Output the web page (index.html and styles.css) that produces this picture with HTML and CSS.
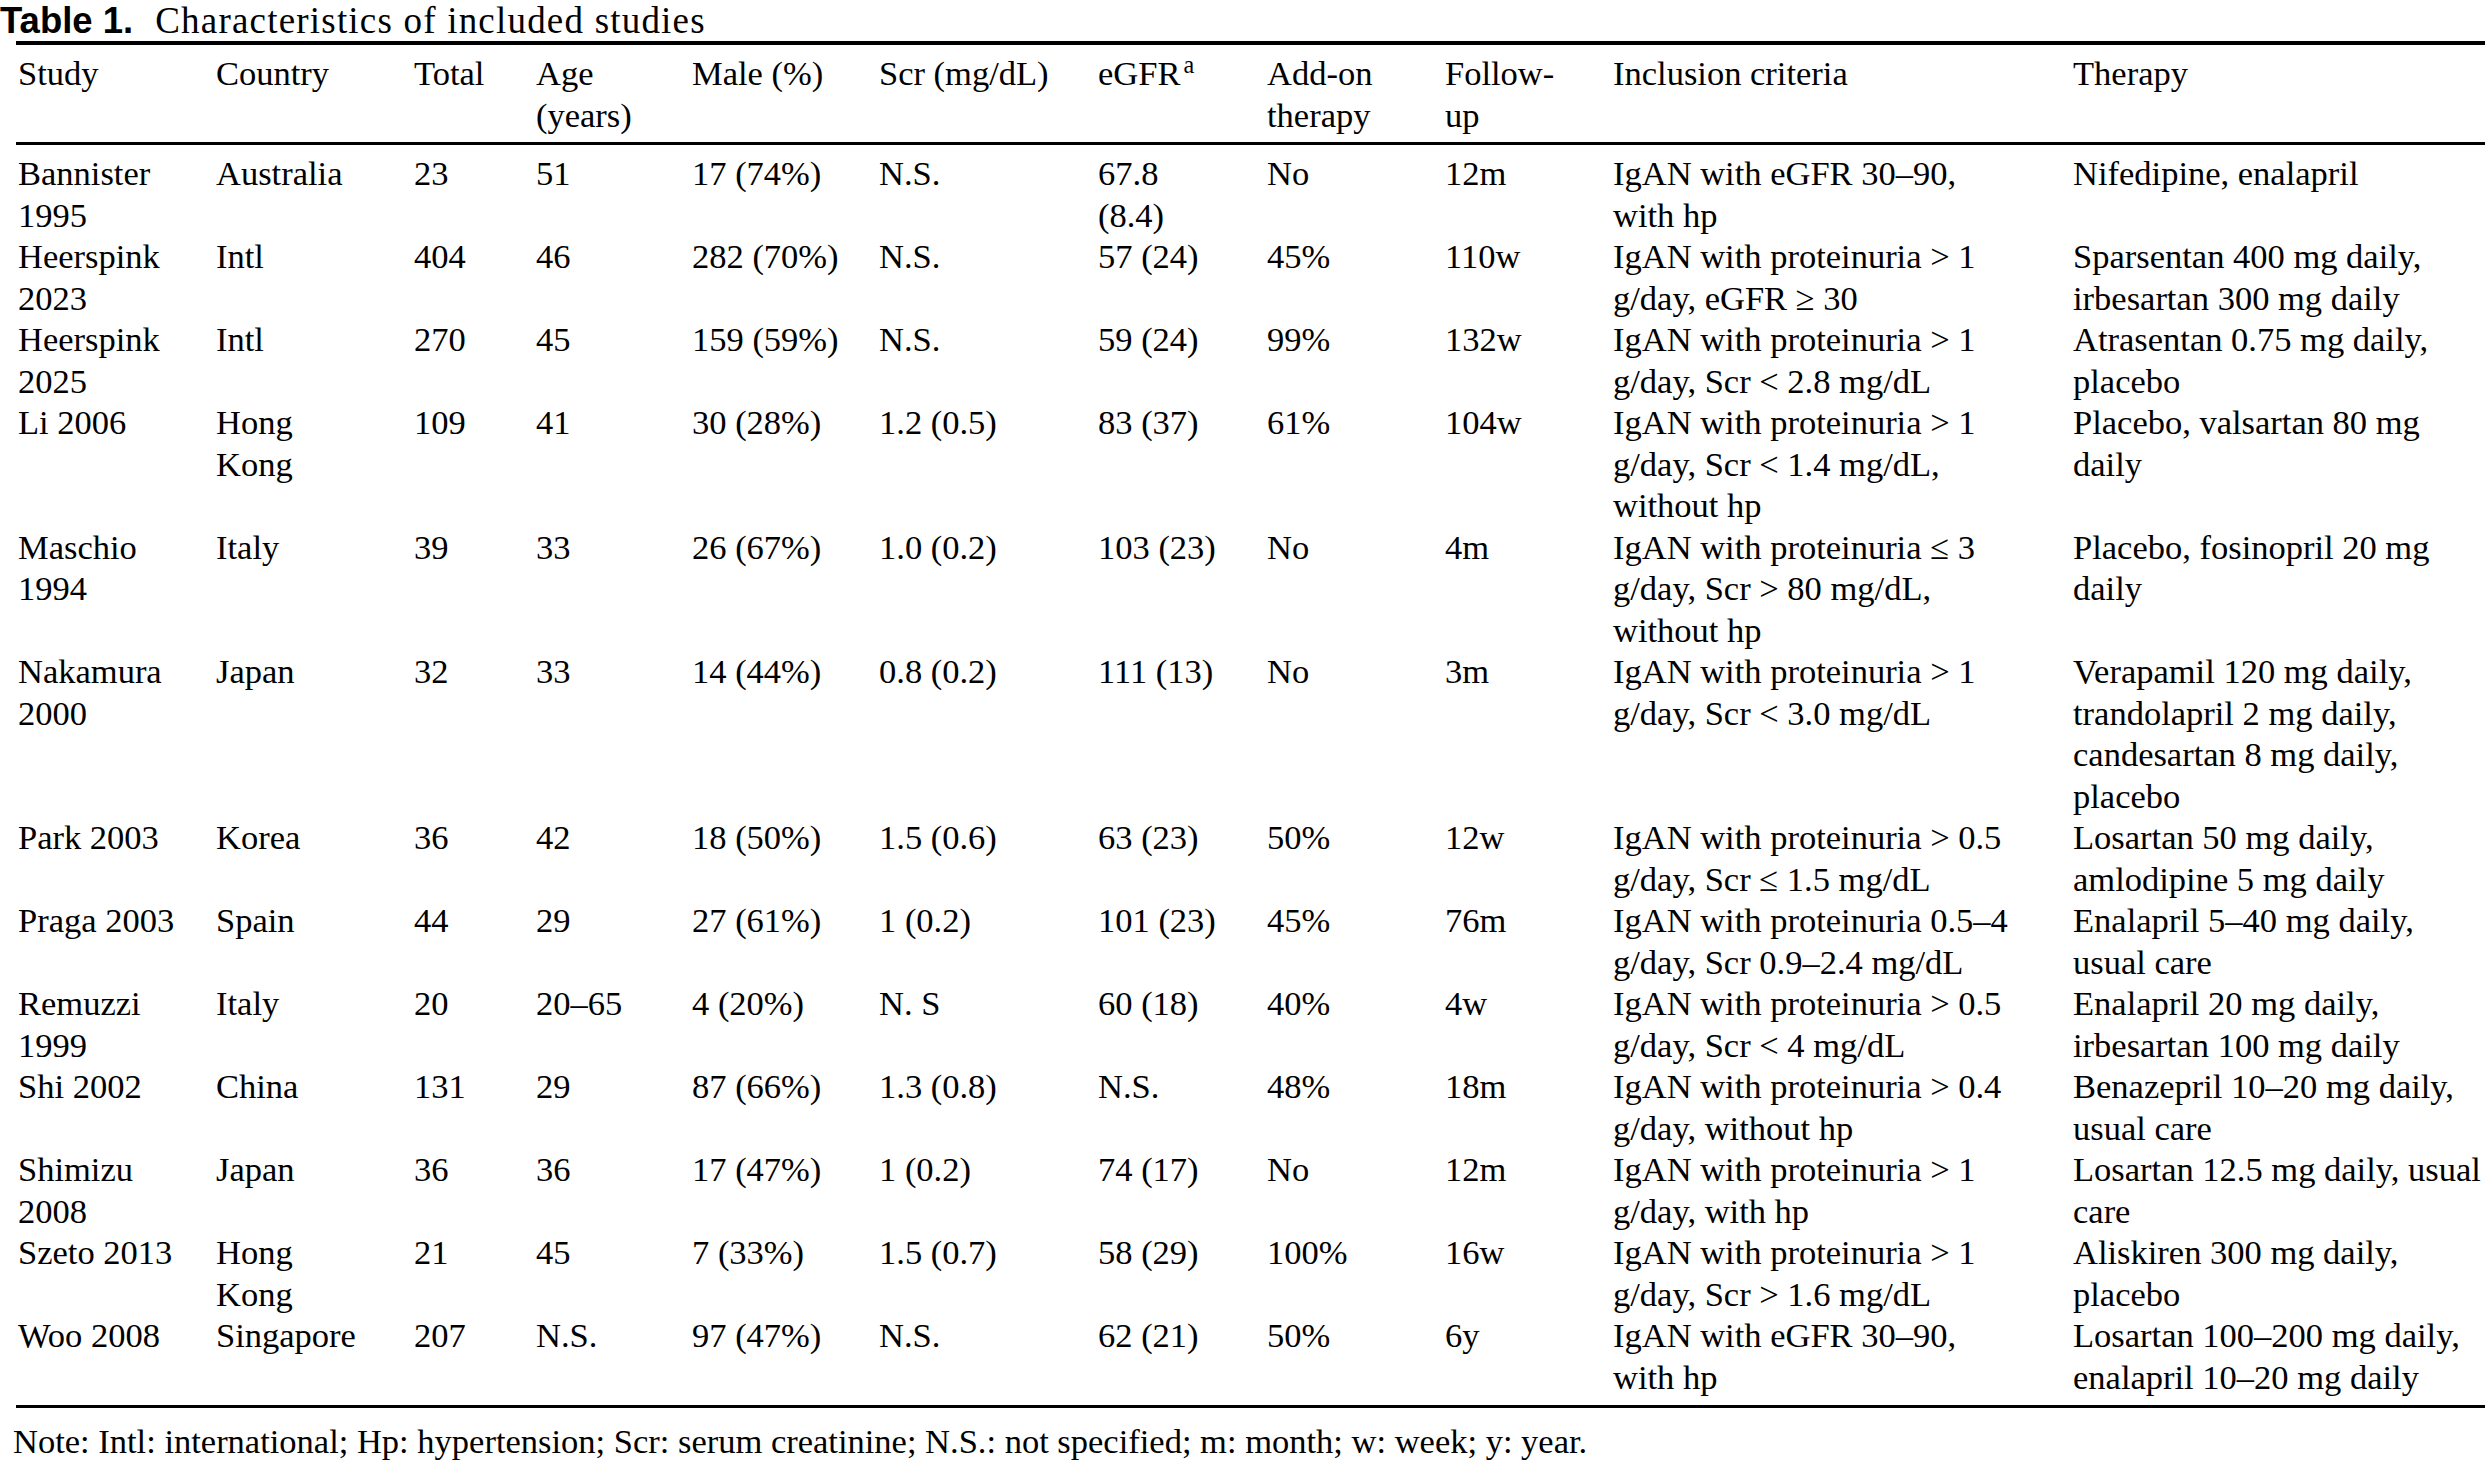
FILE: index.html
```html
<!DOCTYPE html>
<html lang="en">
<head>
<meta charset="utf-8">
<title>Table 1. Characteristics of included studies</title>
<link rel="stylesheet" href="styles.css">
</head>
<body>
<div class="caption"><span class="label">Table 1.</span><span class="caption-text">Characteristics of included studies</span></div>
<table class="studies">
<colgroup>
<col class="c-study"><col class="c-country"><col class="c-total"><col class="c-age"><col class="c-male"><col class="c-scr"><col class="c-egfr"><col class="c-addon"><col class="c-follow"><col class="c-incl"><col class="c-therapy">
</colgroup>
<thead>
<tr>
<th>Study</th><th>Country</th><th>Total</th><th>Age<br>(years)</th><th>Male (%)</th><th>Scr (mg/dL)</th><th>eGFR<sup>a</sup></th><th>Add-on<br>therapy</th><th>Follow-<br>up</th><th>Inclusion criteria</th><th>Therapy</th>
</tr>
</thead>
<tbody>
<tr><td>Bannister<br>1995</td><td>Australia</td><td>23</td><td>51</td><td>17 (74%)</td><td>N.S.</td><td>67.8<br>(8.4)</td><td>No</td><td>12m</td><td>IgAN with eGFR 30–90,<br>with hp</td><td>Nifedipine, enalapril</td></tr>
<tr><td>Heerspink<br>2023</td><td>Intl</td><td>404</td><td>46</td><td>282 (70%)</td><td>N.S.</td><td>57 (24)</td><td>45%</td><td>110w</td><td>IgAN with proteinuria &gt; 1<br>g/day, eGFR ≥ 30</td><td>Sparsentan 400 mg daily,<br>irbesartan 300 mg daily</td></tr>
<tr><td>Heerspink<br>2025</td><td>Intl</td><td>270</td><td>45</td><td>159 (59%)</td><td>N.S.</td><td>59 (24)</td><td>99%</td><td>132w</td><td>IgAN with proteinuria &gt; 1<br>g/day, Scr &lt; 2.8 mg/dL</td><td>Atrasentan 0.75 mg daily,<br>placebo</td></tr>
<tr><td>Li 2006</td><td>Hong<br>Kong</td><td>109</td><td>41</td><td>30 (28%)</td><td>1.2 (0.5)</td><td>83 (37)</td><td>61%</td><td>104w</td><td>IgAN with proteinuria &gt; 1<br>g/day, Scr &lt; 1.4 mg/dL,<br>without hp</td><td>Placebo, valsartan 80 mg<br>daily</td></tr>
<tr><td>Maschio<br>1994</td><td>Italy</td><td>39</td><td>33</td><td>26 (67%)</td><td>1.0 (0.2)</td><td>103 (23)</td><td>No</td><td>4m</td><td>IgAN with proteinuria ≤ 3<br>g/day, Scr &gt; 80 mg/dL,<br>without hp</td><td>Placebo, fosinopril 20 mg<br>daily</td></tr>
<tr><td>Nakamura<br>2000</td><td>Japan</td><td>32</td><td>33</td><td>14 (44%)</td><td>0.8 (0.2)</td><td>111 (13)</td><td>No</td><td>3m</td><td>IgAN with proteinuria &gt; 1<br>g/day, Scr &lt; 3.0 mg/dL</td><td>Verapamil 120 mg daily,<br>trandolapril 2 mg daily,<br>candesartan 8 mg daily,<br>placebo</td></tr>
<tr><td>Park 2003</td><td>Korea</td><td>36</td><td>42</td><td>18 (50%)</td><td>1.5 (0.6)</td><td>63 (23)</td><td>50%</td><td>12w</td><td>IgAN with proteinuria &gt; 0.5<br>g/day, Scr ≤ 1.5 mg/dL</td><td>Losartan 50 mg daily,<br>amlodipine 5 mg daily</td></tr>
<tr><td>Praga 2003</td><td>Spain</td><td>44</td><td>29</td><td>27 (61%)</td><td>1 (0.2)</td><td>101 (23)</td><td>45%</td><td>76m</td><td>IgAN with proteinuria 0.5–4<br>g/day, Scr 0.9–2.4 mg/dL</td><td>Enalapril 5–40 mg daily,<br>usual care</td></tr>
<tr><td>Remuzzi<br>1999</td><td>Italy</td><td>20</td><td>20–65</td><td>4 (20%)</td><td>N. S</td><td>60 (18)</td><td>40%</td><td>4w</td><td>IgAN with proteinuria &gt; 0.5<br>g/day, Scr &lt; 4 mg/dL</td><td>Enalapril 20 mg daily,<br>irbesartan 100 mg daily</td></tr>
<tr><td>Shi 2002</td><td>China</td><td>131</td><td>29</td><td>87 (66%)</td><td>1.3 (0.8)</td><td>N.S.</td><td>48%</td><td>18m</td><td>IgAN with proteinuria &gt; 0.4<br>g/day, without hp</td><td>Benazepril 10–20 mg daily,<br>usual care</td></tr>
<tr><td>Shimizu<br>2008</td><td>Japan</td><td>36</td><td>36</td><td>17 (47%)</td><td>1 (0.2)</td><td>74 (17)</td><td>No</td><td>12m</td><td>IgAN with proteinuria &gt; 1<br>g/day, with hp</td><td>Losartan 12.5 mg daily, usual<br>care</td></tr>
<tr><td>Szeto 2013</td><td>Hong<br>Kong</td><td>21</td><td>45</td><td>7 (33%)</td><td>1.5 (0.7)</td><td>58 (29)</td><td>100%</td><td>16w</td><td>IgAN with proteinuria &gt; 1<br>g/day, Scr &gt; 1.6 mg/dL</td><td>Aliskiren 300 mg daily,<br>placebo</td></tr>
<tr><td>Woo 2008</td><td>Singapore</td><td>207</td><td>N.S.</td><td>97 (47%)</td><td>N.S.</td><td>62 (21)</td><td>50%</td><td>6y</td><td>IgAN with eGFR 30–90,<br>with hp</td><td>Losartan 100–200 mg daily,<br>enalapril 10–20 mg daily</td></tr>
</tbody>
</table>
<p class="note">Note: Intl: international; Hp: hypertension; Scr: serum creatinine; N.S.: not specified; m: month; w: week; y: year.</p>
</body>
</html>
```
FILE: styles.css
```css
html, body {
  margin: 0;
  padding: 0;
  background: #ffffff;
  color: #000000;
}

body {
  font-family: "Liberation Serif", "Times New Roman", serif;
  font-size: 34.5px;
  line-height: 41.5px;
}

.caption {
  height: 41px;
  line-height: 41px;
  margin: 0;
  white-space: nowrap;
}

.label {
  font-family: "Liberation Sans", Arial, sans-serif;
  font-weight: bold;
  font-size: 36.5px;
  margin-right: 22px;
}

.caption-text {
  font-size: 37px;
  letter-spacing: 1.2px;
}

.studies {
  margin-left: 16px;
  width: 2469px;
  table-layout: fixed;
  border-collapse: separate;
  border-spacing: 0;
  border-top: 4px solid #000;
}

.c-study { width: 198px; }
.c-country { width: 198px; }
.c-total { width: 122px; }
.c-age { width: 156px; }
.c-male { width: 187px; }
.c-scr { width: 219px; }
.c-egfr { width: 169px; }
.c-addon { width: 178px; }
.c-follow { width: 168px; }
.c-incl { width: 460px; }
.c-therapy { width: 414px; }

.studies th,
.studies td {
  text-align: left;
  vertical-align: top;
  font-weight: normal;
  padding: 0 0 0 2px;
  white-space: nowrap;
  overflow: visible;
}

.studies th {
  padding-top: 8px;
  padding-bottom: 6px;
  border-bottom: 3px solid #000;
}

.studies tbody tr:first-child td {
  padding-top: 8px;
}

.studies tbody tr:last-child td {
  padding-bottom: 7px;
  border-bottom: 3px solid #000;
}

.studies sup {
  font-size: 0.7em;
  line-height: 0;
  vertical-align: 0.5em;
  margin-left: 3px;
}

.note {
  margin: 13px 0 0 13px;
  white-space: nowrap;
}
```
